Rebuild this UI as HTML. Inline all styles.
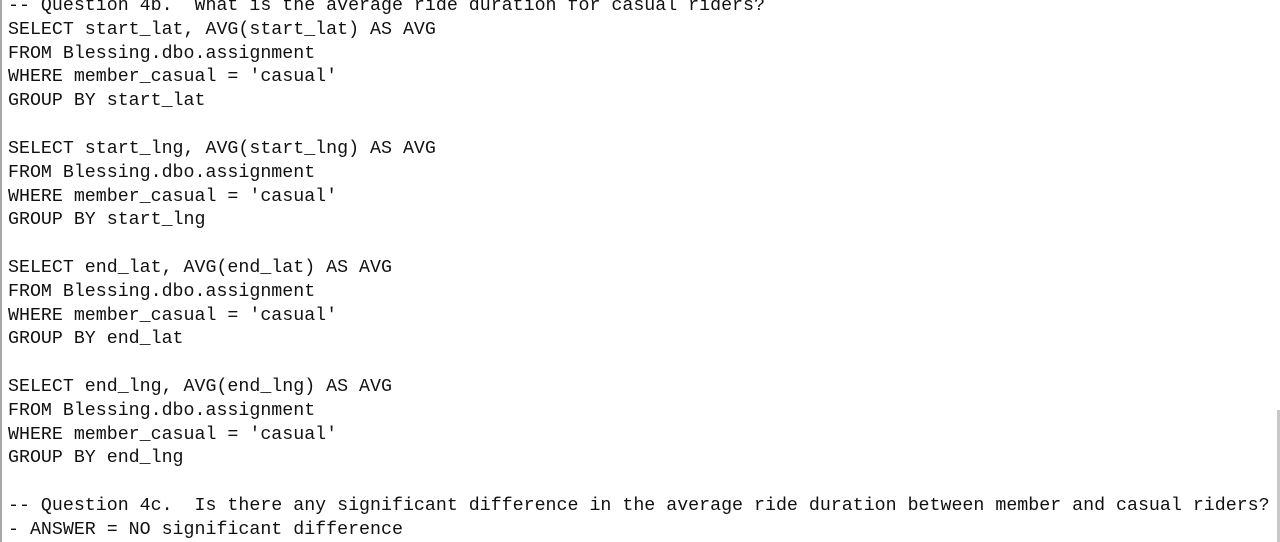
<!DOCTYPE html>
<html><head><meta charset="utf-8"><style>
html,body{margin:0;padding:0;width:1280px;height:542px;overflow:hidden;background:#fff;position:relative}
.lb{position:absolute;left:0;top:0;width:2px;height:542px;background:#a8a8a8}
.rb{position:absolute;right:0;top:410px;width:3px;height:132px;background:#c8c8c8}
pre{position:absolute;left:8px;top:-5px;margin:0;font-family:"Liberation Mono",monospace;font-size:18.3px;line-height:23.82px;color:#111}
</style></head><body>
<div class="lb"></div><div class="rb"></div>
<pre>-- Question 4b.  What is the average ride duration for casual riders?
SELECT start_lat, AVG(start_lat) AS AVG
FROM Blessing.dbo.assignment
WHERE member_casual = 'casual'
GROUP BY start_lat

SELECT start_lng, AVG(start_lng) AS AVG
FROM Blessing.dbo.assignment
WHERE member_casual = 'casual'
GROUP BY start_lng

SELECT end_lat, AVG(end_lat) AS AVG
FROM Blessing.dbo.assignment
WHERE member_casual = 'casual'
GROUP BY end_lat

SELECT end_lng, AVG(end_lng) AS AVG
FROM Blessing.dbo.assignment
WHERE member_casual = 'casual'
GROUP BY end_lng

-- Question 4c.  Is there any significant difference in the average ride duration between member and casual riders?
- ANSWER = NO significant difference</pre>
</body></html>
